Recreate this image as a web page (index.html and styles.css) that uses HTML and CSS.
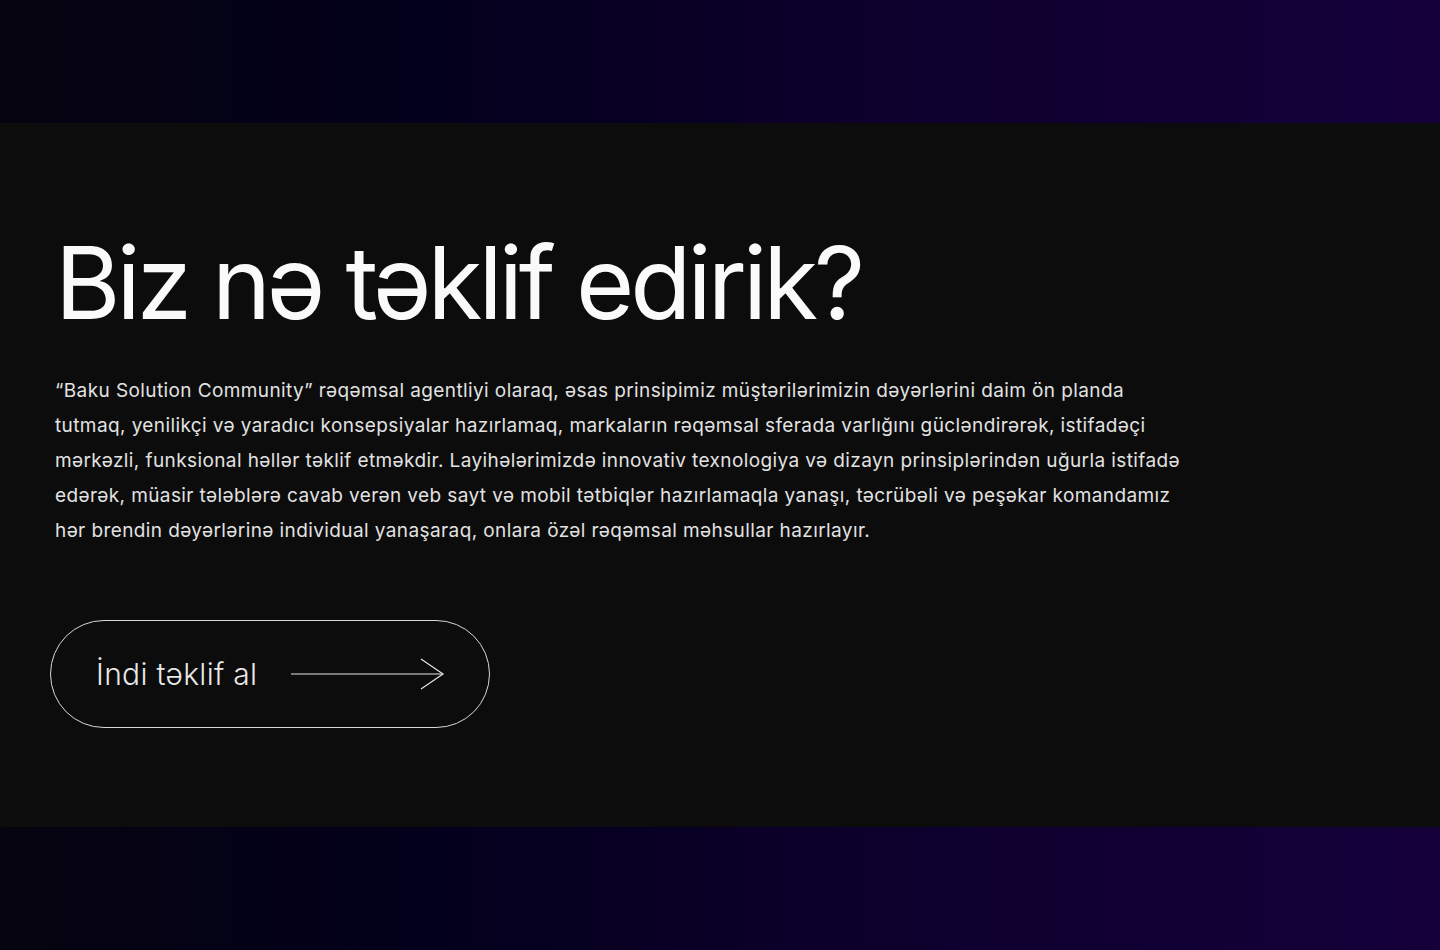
FILE: index.html
```html
<!DOCTYPE html>
<html lang="az">
<head>
<meta charset="utf-8">
<title>Biz nə təklif edirik?</title>
<link rel="stylesheet" href="styles.css">
</head>
<body>
<div class="band band-top"></div>
<section class="offer">
  <h1 class="offer-title">Biz nə təklif edirik?</h1>
  <p class="offer-text">“Baku Solution Community” rəqəmsal agentliyi olaraq, əsas prinsipimiz müştərilərimizin dəyərlərini daim ön planda<br>tutmaq, yenilikçi və yaradıcı konsepsiyalar hazırlamaq, markaların rəqəmsal sferada varlığını gücləndirərək, istifadəçi<br>mərkəzli, funksional həllər təklif etməkdir. Layihələrimizdə innovativ texnologiya və dizayn prinsiplərindən uğurla istifadə<br>edərək, müasir tələblərə cavab verən veb sayt və mobil tətbiqlər hazırlamaqla yanaşı, təcrübəli və peşəkar komandamız<br>hər brendin dəyərlərinə individual yanaşaraq, onlara özəl rəqəmsal məhsullar hazırlayır.</p>
  <a class="offer-btn" href="#">
    <span class="offer-btn-label">İndi təklif al</span>
    <svg class="offer-btn-arrow" width="154" height="32" viewBox="0 0 154 32" fill="none" stroke="#e6e6e6" stroke-width="1.2">
      <path d="M0 16H152"/>
      <path d="M130 1L152 16L130 31"/>
    </svg>
  </a>
</section>
<div class="band band-bottom"></div>
</body>
</html>
```

FILE: styles.css
```css
* { box-sizing: border-box; }
html, body { margin: 0; padding: 0; }
body {
  background: #0c0c0c;
  font-family: "Inter", "Noto Sans", sans-serif;
  color: #f5f5f5;
  width: 1440px;
}
.band {
  height: 123px;
  background: linear-gradient(90deg, #05040f 0%, #03001c 30%, #0d002c 60%, #15003a 100%);
}
.offer {
  height: 704px;
  background: #0c0c0c;
  padding: 110px 0 0 55px;
}
.offer-title {
  margin: 0;
  font-size: 100px;
  font-weight: 400;
  line-height: 1;
  letter-spacing: -4px;
  color: #fafafa;
}
.offer-text {
  margin: 40px 0 0;
  font-size: 19px;
  line-height: 35px;
  letter-spacing: 0.4px;
  color: #e2e2e2;
  font-weight: 400;
  white-space: nowrap;
}
.offer-btn {
  margin: 72px 0 0 -5px;
  width: 440px;
  height: 108px;
  border: 1px solid #d8d8d8;
  border-radius: 54px;
  display: flex;
  align-items: center;
  padding: 0 44px 0 45px;
  justify-content: space-between;
  text-decoration: none;
  color: #e8e8e8;
}
.offer-btn-label {
  font-size: 30px;
  font-weight: 300;
  letter-spacing: 0.3px;
}
.offer-btn-arrow { display: block; }
```
